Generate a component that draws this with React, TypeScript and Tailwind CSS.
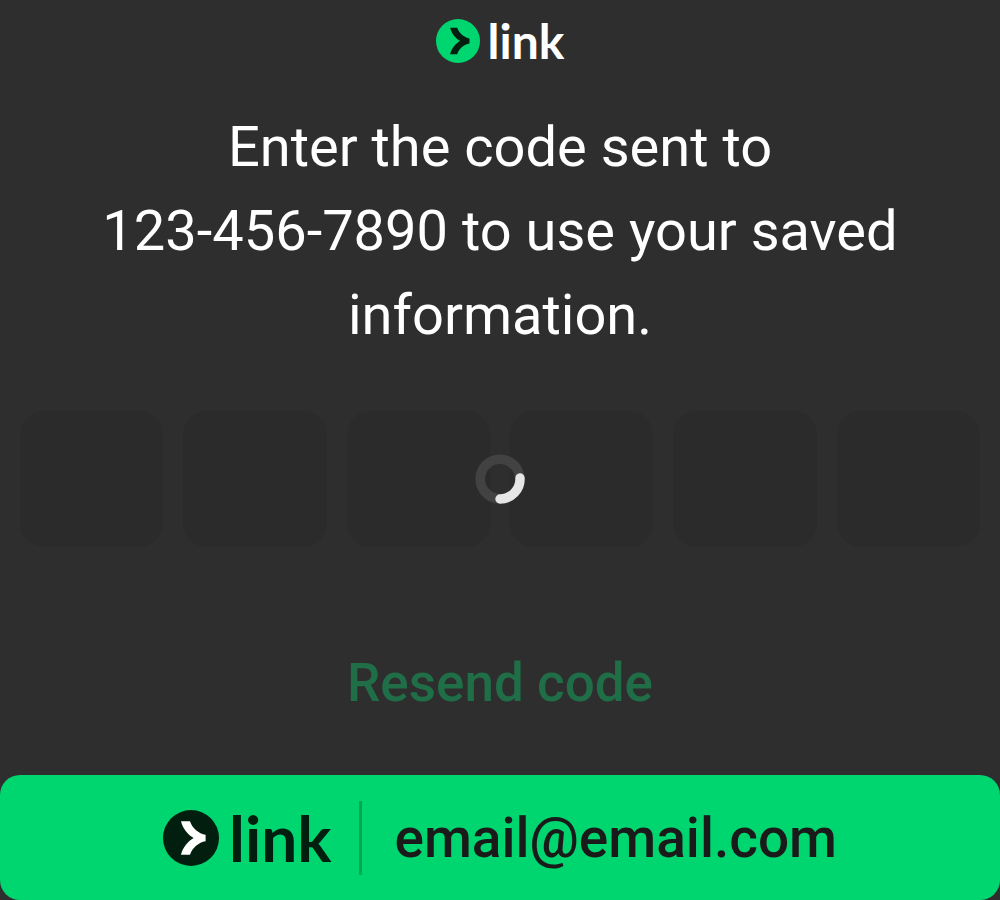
import { useState } from "react";

function LinkMark({ className, disc, arrow }: { className: string; disc: string; arrow: string }) {
  return (
    <svg viewBox="0 0 56 56" className={className} aria-hidden="true">
      <circle cx="28" cy="28" r="28" className={disc} />
      <path
        className={arrow}
        d="M27 11.2H18C19.8 18.5 24.6 24.5 30.6 28C24.6 31.5 19.8 37.5 18 44.8H27C29.3 37.8 35.7 32.4 42.6 31.3V24.7C35.7 23.6 29.3 18.2 27 11.2Z"
      />
    </svg>
  );
}

function Spinner() {
  return (
    <svg viewBox="0 0 50 50" className="size-[50px]" role="status" aria-label="Loading">
      <circle cx="25" cy="25" r="19.8" fill="none" strokeWidth="9.6" className="stroke-[#424242]" />
      <path
        d="M45 24A20 20 0 0 1 25 45"
        fill="none"
        strokeWidth="9.4"
        strokeLinecap="round"
        className="stroke-[#e6e6e6]"
      />
    </svg>
  );
}

export default function App() {
  const [digits, setDigits] = useState<string[]>(["", "", "", "", "", ""]);

  return (
    <div className="flex min-h-screen flex-col bg-[#2e2e2e] font-[Roboto,sans-serif] text-white">
      <header className="flex items-center justify-center gap-2 pt-[17px]">
        <LinkMark className="size-11" disc="fill-[#00d66f]" arrow="fill-[#011e0f]" />
        <span className="font-[Lato,sans-serif] text-5xl leading-[48px] font-bold">link</span>
      </header>

      <h1 className="mx-auto mt-10 max-w-[880px] text-center text-[56px] leading-[84px] font-normal">
        Enter the code sent to
        <br />
        123-456-7890 to use your saved information.
      </h1>

      <div className="relative mt-[54px] px-5">
        <div className="grid grid-cols-6 gap-5">
          {digits.map((digit, i) => (
            <input
              key={i}
              aria-label={`Digit ${i + 1}`}
              inputMode="numeric"
              maxLength={1}
              disabled
              value={digit}
              onChange={(e) => setDigits(digits.map((d, j) => (j === i ? e.target.value : d)))}
              className="h-[136px] w-full min-w-0 rounded-3xl bg-[#2b2b2b] text-center text-5xl"
            />
          ))}
        </div>
        <div className="absolute inset-0 flex items-center justify-center">
          <Spinner />
        </div>
      </div>

      <button type="button" className="mx-auto mt-[94px] text-[53px] leading-[84px] font-medium text-[#1f6e47]">
        Resend code
      </button>

      <button
        type="button"
        className="mt-auto flex h-[125px] items-center justify-center rounded-[20px] bg-[#00d66f] text-[#011e0f]"
      >
        <LinkMark className="size-14" disc="fill-[#011e0f]" arrow="fill-white" />
        <span className="ml-2.5 font-[Lato,sans-serif] text-[64px] leading-[64px] font-bold">link</span>
        <span className="mr-8 ml-7 h-[74px] w-[3px] bg-[#04a858]" />
        <span className="text-[55px] leading-[66px] font-medium text-[#1a1a1a]">email@email.com</span>
      </button>
    </div>
  );
}
